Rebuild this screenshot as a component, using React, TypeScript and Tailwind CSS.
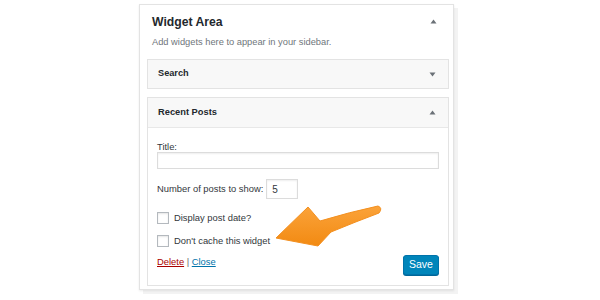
import React from "react";

const Up = () => (
  <svg width="7" height="5" viewBox="0 0 7 5"><polygon points="3.5,0.5 6.5,4.5 0.5,4.5" fill="#6b7177" /></svg>
);
const Down = () => (
  <svg width="7" height="5" viewBox="0 0 7 5"><polygon points="0.5,0.5 6.5,0.5 3.5,4.5" fill="#6b7177" /></svg>
);

export default function App() {
  return (
    <div
      className="relative w-[600px] h-[300px] bg-white overflow-hidden"
      style={{ fontFamily: '"Liberation Sans", Arial, sans-serif' }}
    >
      <div className="pl-[139px] pt-[4px]">
        <div className="w-[315px] h-[286px] border border-[#e3e3e3] bg-white shadow-[0_1px_2px_rgba(0,0,0,0.08),4px_4px_0_#f3f3f3] pl-[7px] pr-[4px] flex flex-col">
          <div className="h-[25px] flex items-end justify-between pl-[5px] pr-[12px] pb-[2px]">
            <span className="text-[12.2px] font-bold text-[#23282d] leading-none">Widget Area</span>
            <span className="mb-[4px]"><Up /></span>
          </div>
          <div className="h-[29px] pl-[5px] pt-[8px] text-[9.3px] text-[#6f767c] leading-none">
            Add widgets here to appear in your sidebar.
          </div>
          <div className="h-[30px] border border-[#e3e3e3] bg-[#f8f8f8] flex items-center justify-between pl-[10px] pr-[12px]">
            <span className="text-[9.2px] font-bold text-[#23282d]">Search</span>
            <Down />
          </div>
          <div className="mt-[8px] h-[189px] border border-[#e3e3e3] flex flex-col">
            <div className="h-[30px] bg-[#f8f8f8] border-b border-[#e8e8e8] flex items-center justify-between pl-[10px] pr-[12px] shrink-0">
              <span className="text-[9.3px] font-bold text-[#23282d]">Recent Posts</span>
              <Up />
            </div>
            <div className="px-[9px] pt-[13px] text-[9.4px] text-[#32373c] flex flex-col">
              <div className="h-[11px] leading-[11px]">Title:</div>
              <div className="h-[17px] border border-[#dcdcdc] shadow-[inset_0_1px_2px_rgba(0,0,0,0.07)]" />
              <div className="mt-[10px] flex items-center gap-[3px]">
                <span>Number of posts to show:</span>
                <div className="w-[32px] h-[20px] border border-[#dcdcdc] shadow-[inset_0_1px_2px_rgba(0,0,0,0.07)] flex items-center pl-[5px] text-[10px] text-[#32373c]">5</div>
              </div>
              <div className="mt-[13px] flex items-center gap-[5px] h-[12px]">
                <div className="w-[12px] h-[12px] border border-[#b4b9be] shadow-[inset_0_1px_2px_rgba(0,0,0,0.1)]" />
                <span>Display post date?</span>
              </div>
              <div className="mt-[11px] flex items-center gap-[5px] h-[12px]">
                <div className="w-[12px] h-[12px] border border-[#b4b9be] shadow-[inset_0_1px_2px_rgba(0,0,0,0.1)]" />
                <span>Don't cache this widget</span>
              </div>
              <div className="mt-[8px] flex items-center justify-between">
                <span className="mt-[-6px]">
                  <span className="text-[#a00] underline">Delete</span>
                  <span className="text-[#666]"> | </span>
                  <span className="text-[#0073aa] underline">Close</span>
                </span>
                <div className="w-[36px] h-[20px] rounded-[3px] bg-[#0085ba] border border-[#0073aa] shadow-[0_1px_0_#006799] flex items-center justify-center text-white text-[10.5px]">
                  Save
                </div>
              </div>
            </div>
          </div>
        </div>
      </div>
      <svg className="absolute left-0 top-0 pointer-events-none" width="600" height="300" viewBox="0 0 600 300">
        <defs>
          <linearGradient id="ag" x1="0" y1="0" x2="0" y2="1">
            <stop offset="0" stopColor="#fba33a" />
            <stop offset="1" stopColor="#f28a12" />
          </linearGradient>
        </defs>
        <path
          d="M276 238 L308 207 L320 221 Q350 212 378 206 Q383 208 379 213 Q355 222 331 232 L318 246 Z"
          fill="url(#ag)"
          stroke="#f39020"
          strokeWidth="1"
          strokeLinejoin="round"
        />
      </svg>
    </div>
  );
}
